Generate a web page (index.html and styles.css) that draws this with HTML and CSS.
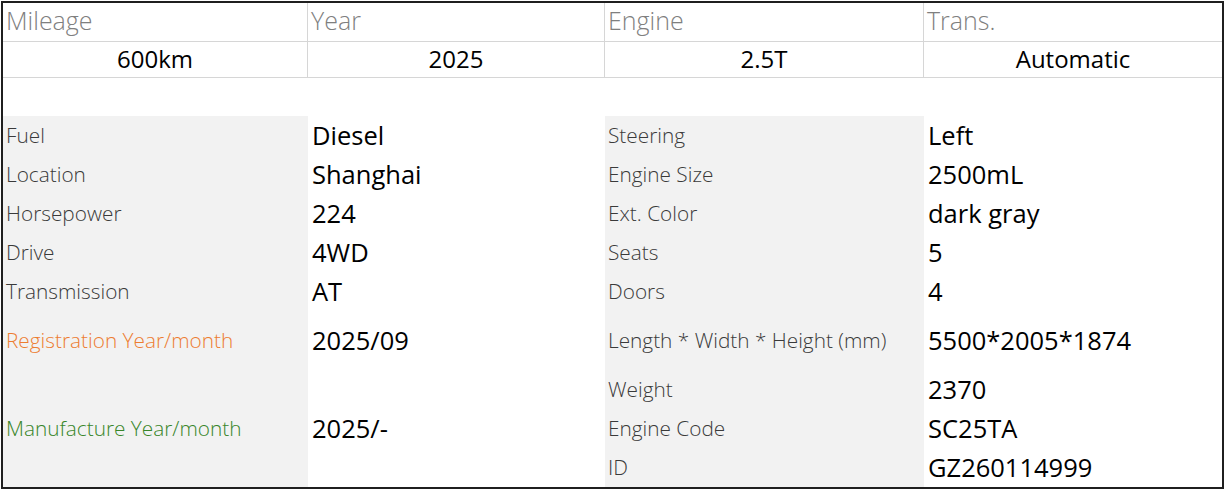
FILE: index.html
```html
<!DOCTYPE html>
<html lang="en">
<head>
<meta charset="utf-8">
<title>Vehicle specs</title>
<link rel="stylesheet" href="styles.css">
</head>
<body>
<div class="sheet">
  <div class="head">
    <div class="hcell hlabel">Mileage</div>
    <div class="hcell hlabel">Year</div>
    <div class="hcell hlabel">Engine</div>
    <div class="hcell hlabel last">Trans.</div>
    <div class="hcell hval">600km</div>
    <div class="hcell hval">2025</div>
    <div class="hcell hval">2.5T</div>
    <div class="hcell hval last">Automatic</div>
  </div>
  <div class="spacer"></div>
  <div class="data">
    <div class="lab r1 c1">Fuel</div>
    <div class="val r1 c2">Diesel</div>
    <div class="lab r1 c3">Steering</div>
    <div class="val r1 c4">Left</div>

    <div class="lab r2 c1">Location</div>
    <div class="val r2 c2">Shanghai</div>
    <div class="lab r2 c3">Engine Size</div>
    <div class="val r2 c4">2500mL</div>

    <div class="lab r3 c1">Horsepower</div>
    <div class="val r3 c2">224</div>
    <div class="lab r3 c3">Ext. Color</div>
    <div class="val r3 c4">dark gray</div>

    <div class="lab r4 c1">Drive</div>
    <div class="val r4 c2">4WD</div>
    <div class="lab r4 c3">Seats</div>
    <div class="val r4 c4">5</div>

    <div class="lab r5 c1">Transmission</div>
    <div class="val r5 c2">AT</div>
    <div class="lab r5 c3">Doors</div>
    <div class="val r5 c4">4</div>

    <div class="lab r6 c1 reg">Registration Year/month</div>
    <div class="val r6 c2">2025/09</div>
    <div class="lab r6 c3">Length * Width * Height (mm)</div>
    <div class="val r6 c4">5500*2005*1874</div>

    <div class="lab r7 c1 mfg">Manufacture Year/month</div>
    <div class="val r7 c2">2025/-</div>
    <div class="lab r7 c3">Weight</div>
    <div class="val r7 c4">2370</div>

    <div class="lab r8 c3">Engine Code</div>
    <div class="val r8 c4">SC25TA</div>

    <div class="lab r9 c3">ID</div>
    <div class="val r9 c4">GZ260114999</div>
  </div>
</div>
</body>
</html>
```

FILE: styles.css
```css
html, body {
  margin: 0;
  padding: 0;
  background: #ffffff;
}
body {
  padding: 1px 0 0 1px;
  font-family: "Open Sans", "Noto Sans", "Liberation Sans", sans-serif;
  color: #000;
}
.sheet {
  width: 1219px;
  border: 2px solid #1f1f1f;
  background: #fff;
}
.head {
  display: grid;
  grid-template-columns: 305px 297px 319px 298px;
  grid-template-rows: 39px 36px;
}
.hcell {
  border-right: 1px solid #d6d6d6;
  border-bottom: 1px solid #d6d6d6;
  display: flex;
  align-items: center;
  white-space: nowrap;
}
.hcell.last {
  border-right: none;
}
.hlabel {
  font-weight: 300;
  font-size: 25px;
  color: #7f7f7f;
  padding-left: 3px;
  padding-bottom: 4px;
}
.hval {
  justify-content: center;
  font-size: 24px;
  color: #000;
  padding-bottom: 3px;
}
.spacer {
  height: 38px;
}
.data {
  display: grid;
  grid-template-columns: 305px 297px 319px 298px;
  grid-template-rows: repeat(5, 39px) 59px repeat(3, 39px);
}
.lab, .val {
  display: flex;
  align-items: center;
  white-space: nowrap;
}
.c1, .c3 {
  background: #f2f2f2;
}
.c1 { grid-column: 1; padding-left: 3px; }
.c2 { grid-column: 2; padding-left: 4px; }
.c3 { grid-column: 3; padding-left: 3px; }
.c4 { grid-column: 4; padding-left: 4px; }
.r1 { grid-row: 1; }
.r2 { grid-row: 2; }
.r3 { grid-row: 3; }
.r4 { grid-row: 4; }
.r5 { grid-row: 5; }
.r6 { grid-row: 6; }
.r7 { grid-row: 7; }
.r8 { grid-row: 8; }
.r9 { grid-row: 9; }
.lab.r7.c1, .val.r7.c2 {
  grid-row: 7 / span 3;
}
.lab {
  font-weight: 300;
  font-size: 20.8px;
  color: #3a3a3a;
  padding-bottom: 2px;
}
.val {
  font-size: 25.5px;
  color: #000;
  padding-bottom: 2px;
}
.reg { color: #ed7d31; }
.mfg { color: #38862a; }
```
